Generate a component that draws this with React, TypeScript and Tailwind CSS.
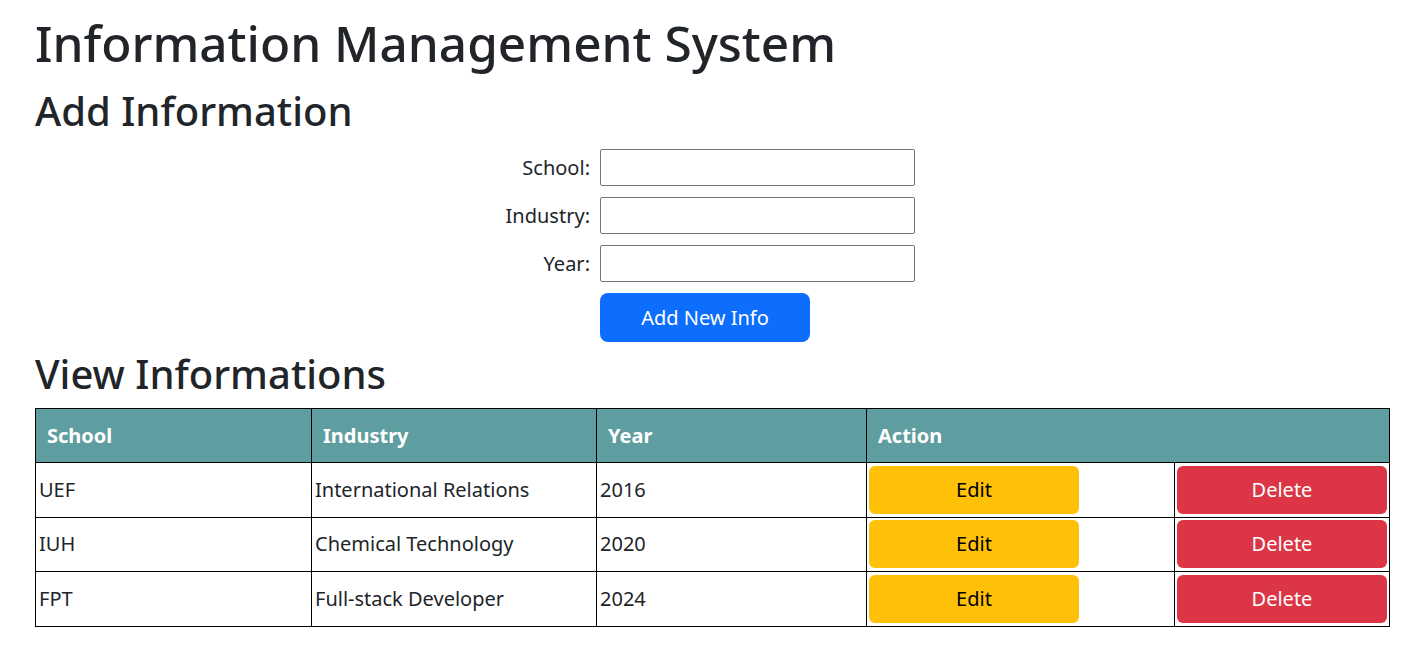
import React from 'react';

const rows = [
  { school: 'UEF', industry: 'International Relations', year: '2016' },
  { school: 'IUH', industry: 'Chemical Technology', year: '2020' },
  { school: 'FPT', industry: 'Full-stack Developer', year: '2024' },
];

const fields = ['School', 'Industry', 'Year'];

export default function App() {
  return (
    <div className="px-[35px] text-[#212529] font-['Noto_Sans',sans-serif]">
      <h1 className="text-[49.5px] leading-[60px] font-medium pt-[13px] mb-[14px]">Information Management System</h1>
      <h2 className="text-[40px] leading-[48px] font-medium mb-[14px]">Add Information</h2>

      {/* Form */}
      <div className="grid grid-cols-[555px_315px] gap-x-[10px] gap-y-[11px] items-center">
        {fields.map((f) => (
          <React.Fragment key={f}>
            <label className="text-right text-[20px]">{f}:</label>
            <input type="text" className="h-[37px] border border-[#767676] rounded-[2px] bg-white" />
          </React.Fragment>
        ))}
        <div />
        <button className="w-[210px] h-[49px] rounded-[8px] bg-[#0d6efd] text-white text-[20px]">Add New Info</button>
      </div>

      <h2 className="text-[40px] leading-[48px] font-medium mt-[8px] mb-[10px]">View Informations</h2>

      {/* Table */}
      <table className="w-[1355px] border-collapse border border-black text-[20px]">
        <thead>
          <tr className="bg-[#5f9ea0] text-white h-[54px]">
            <th className="w-[276px] border border-black text-left font-bold px-[11px]">School</th>
            <th className="w-[285px] border border-black text-left font-bold px-[11px]">Industry</th>
            <th className="w-[270px] border border-black text-left font-bold px-[11px]">Year</th>
            <th colSpan={2} className="border border-black text-left font-bold px-[11px]">Action</th>
          </tr>
        </thead>
        <tbody>
          {rows.map((r) => (
            <tr key={r.school} className="h-[54.5px]">
              <td className="border border-black px-[3px]">{r.school}</td>
              <td className="border border-black px-[3px]">{r.industry}</td>
              <td className="border border-black px-[3px]">{r.year}</td>
              <td className="w-[308px] border border-black p-[2px] align-middle">
                <button className="w-[210px] h-[48px] rounded-[6px] bg-[#ffc107] text-black">Edit</button>
              </td>
              <td className="border border-black p-[2px] align-middle">
                <button className="w-[210px] h-[48px] rounded-[6px] bg-[#dc3545] text-white">Delete</button>
              </td>
            </tr>
          ))}
        </tbody>
      </table>
    </div>
  );
}
